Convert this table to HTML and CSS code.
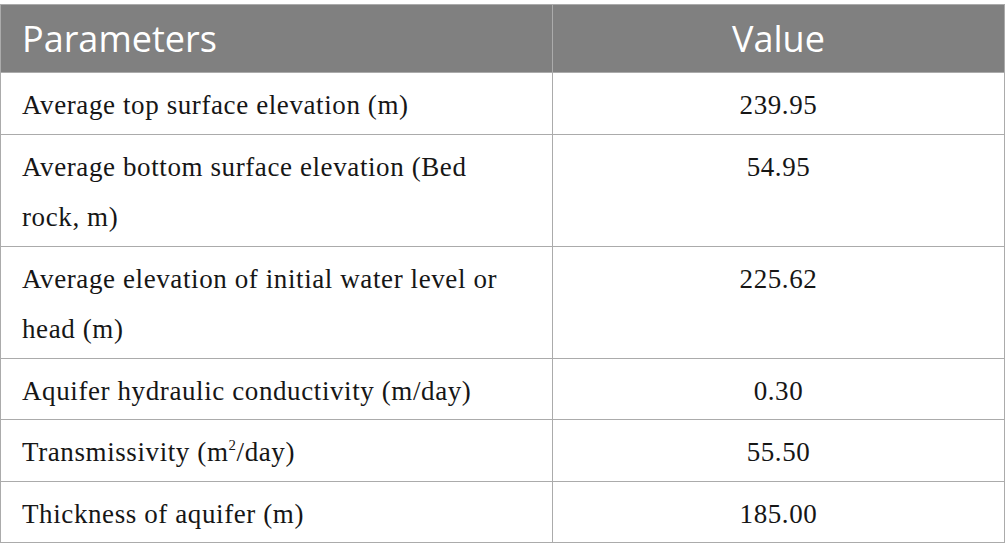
FILE: index.html
```html
<!DOCTYPE html>
<html>
<head>
<meta charset="utf-8">
<link rel="stylesheet" href="styles.css">
</head>
<body>
<table class="params">
  <colgroup>
    <col class="c-name">
    <col class="c-value">
  </colgroup>
  <thead>
    <tr>
      <th class="col-name">Parameters</th>
      <th class="col-value">Value</th>
    </tr>
  </thead>
  <tbody>
    <tr><td class="name">Average top surface elevation (m)</td><td class="val">239.95</td></tr>
    <tr><td class="name">Average bottom surface elevation (Bed rock, m)</td><td class="val">54.95</td></tr>
    <tr><td class="name">Average elevation of initial water level or head (m)</td><td class="val">225.62</td></tr>
    <tr><td class="name">Aquifer hydraulic conductivity (m/day)</td><td class="val">0.30</td></tr>
    <tr><td class="name">Transmissivity (m<sup>2</sup>/day)</td><td class="val">55.50</td></tr>
    <tr><td class="name">Thickness of aquifer (m)</td><td class="val">185.00</td></tr>
  </tbody>
</table>
</body>
</html>
```
FILE: styles.css
```css
html, body {
  margin: 0;
  padding: 0;
  background: #ffffff;
}
body {
  padding-top: 4px;
}
.params {
  border-collapse: collapse;
  width: 1004px;
  table-layout: fixed;
}
.c-name { width: 552px; }
.c-value { width: 452px; }
.params th {
  background: #808080;
  color: #ffffff;
  font-family: "Open Sans", "Noto Sans", sans-serif;
  font-weight: 400;
  font-size: 36px;
  height: 67px;
  padding: 0 21px;
  border: 1px solid #ababab;
  vertical-align: middle;
}
.params th.col-name { text-align: left; }
.params th.col-value { text-align: center; }
.params td {
  font-family: "Liberation Serif", "Times New Roman", serif;
  font-size: 27px;
  letter-spacing: 0.6px;
  line-height: 50.5px;
  color: #161616;
  border: 1px solid #ababab;
  padding: 7px 21px 3px 21px;
  vertical-align: top;
}
.params td.val { text-align: center; }
sup {
  font-size: 0.55em;
  line-height: 0;
  vertical-align: 0.75em;
}
```
